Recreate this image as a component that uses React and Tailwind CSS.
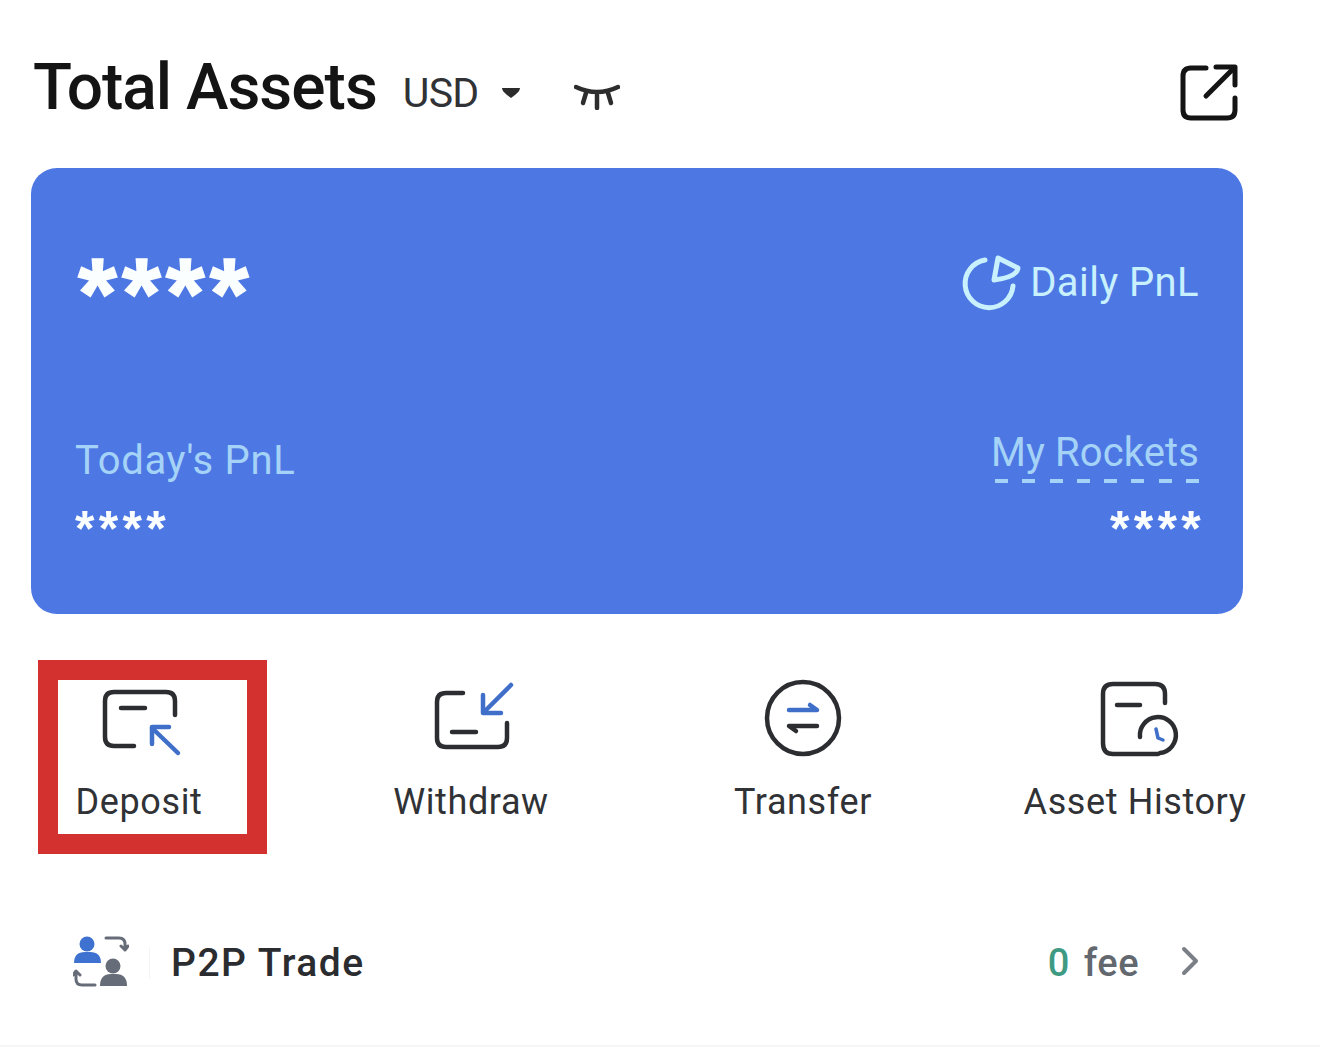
const ink = "#2b2d30";
const blue = "#3f6fc9";

function ExternalIcon() {
  return (
    <svg width="60" height="60" viewBox="0 0 60 60" fill="none" stroke="#141414" strokeWidth="5" strokeLinecap="round" strokeLinejoin="round">
      <path d="M26 5 H11 Q3 5 3 13 V47 Q3 55 11 55 H47 Q55 55 55 47 V35" />
      <path d="M26 33 L53 6" />
      <path d="M36 4 H55 V22" />
    </svg>
  );
}

function EyeIcon() {
  return (
    <svg width="46" height="28" viewBox="0 0 46 28" fill="none" stroke="#2d2d2d" strokeWidth="4.5" strokeLinecap="round">
      <path d="M2 5 Q23 15 44 5" />
      <path d="M12 11 L9 21" />
      <path d="M23 13 V26" />
      <path d="M34 11 L37 21" />
    </svg>
  );
}

function PieIcon() {
  return (
    <svg width="60" height="60" viewBox="0 0 60 60" fill="none" stroke="#c8f1fd" strokeWidth="5" strokeLinecap="round" strokeLinejoin="round">
      <path d="M24 7 A24 24 0 1 0 52 33" />
      <path d="M37 5 L57 15 Q56 24 33 27 Z" />
    </svg>
  );
}

function DepositIcon() {
  return (
    <svg width="84" height="72" viewBox="0 0 84 72" fill="none" strokeWidth="4.5" strokeLinecap="round" strokeLinejoin="round">
      <path d="M73 26 V12 Q73 3 64 3 H12 Q3 3 3 12 V48 Q3 57 12 57 H32" stroke={ink} />
      <path d="M19 19 H43" stroke={ink} />
      <path d="M76 64 L50 39" stroke={blue} />
      <path d="M50 55 V38 H67" stroke={blue} />
    </svg>
  );
}

function WithdrawIcon() {
  return (
    <svg width="84" height="72" viewBox="0 0 84 72" fill="none" strokeWidth="4.5" strokeLinecap="round" strokeLinejoin="round">
      <path d="M29 11 H12 Q3 11 3 20 V56 Q3 65 12 65 H64 Q73 65 73 56 V41" stroke={ink} />
      <path d="M18 50 H42" stroke={ink} />
      <path d="M77 3 L50 30" stroke={blue} />
      <path d="M49 13 V31 H67" stroke={blue} />
    </svg>
  );
}

function TransferIcon() {
  return (
    <svg width="80" height="80" viewBox="0 0 80 80" fill="none" strokeWidth="4.5" strokeLinecap="round" strokeLinejoin="round">
      <circle cx="40" cy="40" r="36" stroke={ink} />
      <path d="M26 32 H54 L47 27" stroke={blue} />
      <path d="M54 48 H26 L33 53" stroke={ink} />
    </svg>
  );
}

function HistoryIcon() {
  return (
    <svg width="84" height="78" viewBox="0 0 84 78" fill="none" strokeWidth="4.5" strokeLinecap="round" strokeLinejoin="round">
      <path d="M65 22 V13 Q65 3 55 3 H13 Q3 3 3 13 V62 Q3 73 13 73 H58" stroke={ink} />
      <path d="M17 24 H40" stroke={ink} />
      <path d="M40 56 A18 18 0 1 1 60 72" stroke={ink} />
      <path d="M56 48 L58 57 L63 59" stroke={blue} strokeWidth="3.5" />
    </svg>
  );
}

function P2PIcon() {
  return (
    <svg width="56" height="54" viewBox="0 0 56 54" fill="none" strokeLinecap="round" strokeLinejoin="round">
      <circle cx="14" cy="10" r="7.5" fill="#3f72d0" />
      <path d="M1 29 Q1 18 12 18 H17 Q28 18 28 29 Z" fill="#3f72d0" />
      <circle cx="40" cy="32" r="7.5" fill="#666c78" />
      <path d="M27 52 Q27 40 38 40 H43 Q54 40 54 52 Z" fill="#666c78" />
      <path d="M33 4 H46 Q52 4 52 10 V16 M48 12 L52 16 L55 12" stroke="#666c78" strokeWidth="3" />
      <path d="M22 51 H9 Q3 51 3 45 V38 M0 41 L3 37 L7 41" stroke="#666c78" strokeWidth="3" />
    </svg>
  );
}

const actions = [
  { label: "Deposit", Icon: DepositIcon, icon: "h-[72px] ml-[10px]", top: "pt-[29px]" },
  { label: "Withdraw", Icon: WithdrawIcon, icon: "h-[72px] ml-[10px]", top: "pt-[22px]" },
  { label: "Transfer", Icon: TransferIcon, icon: "h-[80px]", top: "pt-[18px]" },
  { label: "Asset History", Icon: HistoryIcon, icon: "h-[78px] ml-[14px]", top: "pt-[21px]" },
];

function Action({ label, Icon, icon, top }) {
  return (
    <div className="flex w-[250px] flex-col items-center">
      <div className={`flex h-[120px] w-full flex-col items-center ${top}`}>
        <div className={icon}>
          <Icon />
        </div>
      </div>
      <div className="text-[36px] leading-[44px] tracking-[0.6px] text-[#303236]">{label}</div>
    </div>
  );
}

function Stars({ size }) {
  return <div className={`${size} font-bold text-[#fbfeff] [font-family:'Liberation_Sans',sans-serif]`}>****</div>;
}

export default function App() {
  return (
    <div className="relative h-[1057px] w-[1320px] overflow-hidden bg-white [font-family:Roboto,sans-serif]">
      <header className="flex h-[168px] items-start pl-[33px] pr-[80px]">
        <h1 className="mt-[50px] text-[64px] font-medium leading-[76px] tracking-[-1px] text-[#141414]">Total Assets</h1>
        <div className="mt-[69px] ml-[26px] text-[41px] leading-[48px] tracking-[-0.8px] text-[#303236]">USD</div>
        <svg className="ml-[23px] mt-[87px]" width="20" height="12" viewBox="0 0 20 12">
          <path d="M1 1 H19 Q19 4 14 8 L10 11 L6 8 Q1 4 1 1 Z" fill="#2b2b2b" />
        </svg>
        <div className="ml-[53px] mt-[82px]">
          <EyeIcon />
        </div>
        <div className="ml-auto mt-[63px]">
          <ExternalIcon />
        </div>
      </header>

      <section className="ml-[31px] flex h-[446px] w-[1212px] flex-col justify-between rounded-[26px] bg-[#4d78e4] pl-[44px] pr-[44px]">
        <div className="flex items-start justify-between">
          <div className="ml-[3px] mt-[75px]">
            <Stars size="text-[100px] leading-[100px] tracking-[5px] [-webkit-text-stroke:1.5px_#fbfeff]" />
          </div>
          <div className="mt-[85px] flex items-center">
            <PieIcon />
            <span className="ml-[9px] text-[40px] leading-[56px] tracking-[0.4px] text-[#c8f1fd]">Daily PnL</span>
          </div>
        </div>
        <div className="flex items-start justify-between pb-[74px]">
          <div className="mt-[7px] flex flex-col">
            <div className="text-[40px] leading-[50px] tracking-[0.7px] text-[#a5d3f7]">Today's PnL</div>
            <div className="mt-[18px] h-[36px]">
              <Stars size="text-[50px] leading-[50px] tracking-[4.3px]" />
            </div>
          </div>
          <div className="flex flex-col items-end">
            <div className="mt-[1px] text-[40px] leading-[46px] tracking-[0.1px] text-[#a5d3f7]">My Rockets</div>
            <div className="mt-[3px] flex w-[204px] justify-between">
              {[0, 1, 2, 3, 4, 5, 6, 7].map((i) => (
                <div key={i} className="h-[4px] w-[13px] bg-[#a5d3f7]" />
              ))}
            </div>
            <div className="mr-[-6px] mt-[21px] h-[36px]">
              <Stars size="text-[50px] leading-[50px] tracking-[4.3px]" />
            </div>
          </div>
        </div>
      </section>

      <section className="mt-[46px] flex gap-[82px] pl-[14px]">
        {actions.map((a) => (
          <Action key={a.label} {...a} />
        ))}
      </section>

      <section className="mt-[111px] flex h-[56px] items-center pl-[73px] pr-[121px]">
        <div className="mt-[-4px]">
          <P2PIcon />
        </div>
        <div className="ml-[20px] h-[32px] w-px bg-[#f3f3f3]" />
        <span className="ml-[21px] text-[39px] font-medium tracking-[1.5px] text-[#2a2c30]">P2P Trade</span>
        <span className="ml-auto text-[38px] font-medium tracking-[0.5px] [word-spacing:4px] text-[#63676e]">
          <span className="text-[#3f9a83]">0</span> fee
        </span>
        <svg className="ml-[42px] mt-[-4px]" width="18" height="30" viewBox="0 0 18 30" fill="none" stroke="#7b7f86" strokeWidth="4" strokeLinecap="round" strokeLinejoin="round">
          <path d="M3 3 L15 15 L3 27" />
        </svg>
      </section>

      <div className="mt-[54px] h-[2px] w-full bg-[#f6f6f6]" />

      <div className="absolute left-[38px] top-[660px] h-[194px] w-[229px] border-[20px] border-[#d33130]" />
    </div>
  );
}
